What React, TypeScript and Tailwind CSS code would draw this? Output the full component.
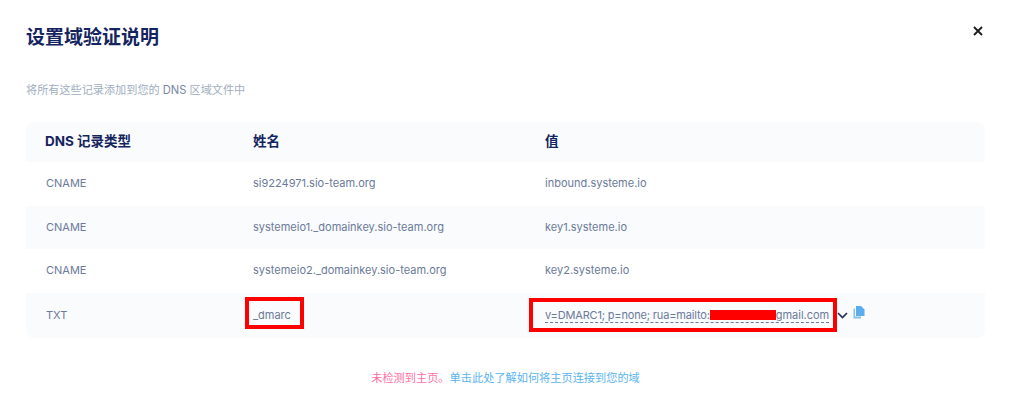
const font = { cjk: 'font-["Inter","Noto_Sans_CJK_SC",sans-serif]' };

const rows = [
  { type: 'CNAME', name: 'si9224971.sio-team.org', value: 'inbound.systeme.io', shaded: false },
  { type: 'CNAME', name: 'systemeio1._domainkey.sio-team.org', value: 'key1.systeme.io', shaded: true },
  { type: 'CNAME', name: 'systemeio2._domainkey.sio-team.org', value: 'key2.systeme.io', shaded: false },
];

function Chevron() {
  return (
    <svg width="11" height="7" viewBox="0 0 11 7" fill="none" stroke="#1e2b5e" strokeWidth="1.6">
      <path d="M1 1 5.5 5.5 10 1" />
    </svg>
  );
}

function CopyIcon() {
  return (
    <svg width="12" height="13" viewBox="0 0 12 13" fill="#5aaeee">
      <path d="M0.5 2.5h1.5v8h6v2h-7.5z" opacity="0.75" />
      <path d="M3 0h5l3.5 3.5v6.5h-8.5z" />
    </svg>
  );
}

export default function App() {
  return (
    <div className={`relative h-[415px] w-[1013px] overflow-hidden bg-white ${font.cjk}`}>
      <div className="absolute right-[29px] top-[25px] text-[#1a1a1a]">
        <svg width="12" height="12" viewBox="0 0 12 12" stroke="currentColor" strokeWidth="1.8">
          <path d="M2 2 10 10M10 2 2 10" />
        </svg>
      </div>

      <div className="px-[26px] pr-[28px]">
        <h1 className="pt-[25px] text-[19px] font-bold leading-[25px] text-[#14245f]">设置域验证说明</h1>
        <p className="mt-[32px] text-[11.15px] leading-[16px] text-[#a0aec0]">
          将所有这些记录添加到您的 <span className="text-[#7a88a3]">DNS</span> 区域文件中
        </p>

        <div className="mt-[24px] text-[11px] text-[#6b7a99]">
          <div className="grid h-[40px] grid-cols-[208px_292px_1fr] items-center rounded-t-lg bg-[#fafbfd] pb-[2px] pl-[19px] text-[13.5px] font-bold text-[#14245f]">
            <div>DNS 记录类型</div>
            <div>姓名</div>
            <div>值</div>
          </div>
          {rows.map((row) => (
            <div
              key={row.name}
              className={`grid grid-cols-[208px_292px_1fr] items-center pl-[19px] ${row.shaded ? 'h-[43px] bg-[#fafbfd]' : 'h-[44px] pb-[2px]'}`}
            >
              <div className="pl-px">{row.type}</div>
              <div>{row.name}</div>
              <div>{row.value}</div>
            </div>
          ))}
          <div className="grid h-[45px] grid-cols-[208px_292px_1fr] items-center rounded-b-lg bg-[#fafbfd] pb-[1px] pl-[19px]">
            <div className="pl-px">TXT</div>
            <div className="relative">
              _dmarc
              <div className="absolute left-[-8px] top-[-10px] h-[32px] w-[59px] border-[4px] border-[#ff0000]" />
            </div>
            <div className="relative flex items-center">
              <span className="flex items-center border-b border-dashed border-[#6b7a99] leading-[14px]">
                <span className="tracking-[-0.17px]">v=DMARC1; p=none; rua=mailto:</span>
                <span className="h-[10px] w-[66px] bg-[#ff0000]" />
                <span>gmail.com</span>
              </span>
              <span className="absolute left-[292px] top-[4px] flex"><Chevron /></span>
              <span className="absolute left-[308px] top-[-2px] flex"><CopyIcon /></span>
              <div className="absolute left-[-16px] top-[-10px] h-[34px] w-[308px] border-[4px] border-[#ff0000]" />
            </div>
          </div>
        </div>

        <p className="mt-[32px] text-center text-[11.2px] leading-[16px] text-[#ff6fa3]">
          未检测到主页。<span className="text-[#5ab4f0]">单击此处了解如何将主页连接到您的域</span>
        </p>
      </div>
    </div>
  );
}
